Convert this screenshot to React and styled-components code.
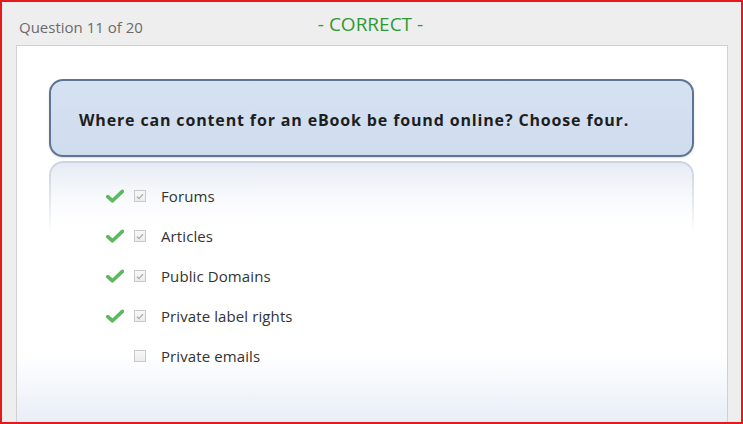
import React from "react";
import styled, { createGlobalStyle } from "styled-components";

const GlobalStyle = createGlobalStyle`
    html, body {
        margin: 0;
        padding: 0;
    }
    body {
        font-family: "Open Sans", "Liberation Sans", sans-serif;
    }
`;

const Frame = styled.div`
    width: 743px;
    height: 424px;
    box-sizing: border-box;
    border: 2px solid #e3191c;
    background: #eeeeee;
    display: flex;
    flex-direction: column;
    overflow: hidden;
`;

const Header = styled.div`
    height: 43px;
    display: grid;
    grid-template-columns: 1fr auto 1fr;
    align-items: start;
    padding: 0 17px;
`;

const Counter = styled.div`
    font-size: 15px;
    color: #6b6b6b;
    padding-top: 15px;
`;

const Verdict = styled.div`
    font-size: 19px;
    color: #2f9a33;
    padding-top: 9px;
    margin-left: -2px;
`;

const Card = styled.div`
    flex: 1;
    margin: 0 13px 0 14px;
    border: 1px solid #d0d0d0;
    border-bottom: none;
    background: linear-gradient(to bottom, #ffffff 0%, #ffffff 82%, #e8eef7 100%);
    padding: 33px 32px 0;
`;

const QuestionBox = styled.div`
    height: 78px;
    width: 645px;
    box-sizing: border-box;
    border: 2px solid #5d7494;
    border-radius: 14px;
    background: linear-gradient(to bottom, #d6e2f2, #cfdcee);
    box-shadow: 0 1px 2px rgba(0, 0, 0, 0.15);
    display: flex;
    align-items: center;
    padding: 4px 0 0 28px;
    font-size: 16px;
    font-weight: 700;
    letter-spacing: 0.85px;
    color: #1e1e1e;
`;

const AnswerArea = styled.div`
    position: relative;
    margin-top: 4px;
    padding-top: 15px;
    width: 645px;

    &::before {
        content: "";
        position: absolute;
        top: 0;
        left: 0;
        right: 0;
        height: 74px;
        box-sizing: border-box;
        border: 2px solid #c9d2de;
        border-bottom: none;
        border-radius: 14px 14px 0 0;
        background: linear-gradient(to bottom, #e4eaf3, #ffffff);
        -webkit-mask-image: linear-gradient(to bottom, #000 0%, rgba(0, 0, 0, 0.55) 50%, transparent 100%);
        mask-image: linear-gradient(to bottom, #000 0%, rgba(0, 0, 0, 0.55) 50%, transparent 100%);
    }
`;

const Option = styled.div`
    position: relative;
    height: 40px;
    display: flex;
    align-items: center;
    padding-left: 57px;
    font-size: 15px;
    color: #333333;
`;

const Mark = styled.span`
    width: 18px;
    height: 14px;
    margin-right: 10px;
    display: flex;
    visibility: ${({ shown }) => (shown ? "visible" : "hidden")};
`;

const Box = styled.span`
    width: 12px;
    height: 12px;
    box-sizing: border-box;
    border: 1px solid #c9c9c9;
    background: linear-gradient(to bottom, #f7f7f7, #ececec);
    margin-right: 15px;
    display: flex;
    align-items: center;
    justify-content: center;
`;

const Label = styled.span`
    line-height: 20px;
    letter-spacing: 0.1px;
`;

const options = [
    { text: "Forums", picked: true },
    { text: "Articles", picked: true },
    { text: "Public Domains", picked: true },
    { text: "Private label rights", picked: true },
    { text: "Private emails", picked: false },
];

function GreenCheck() {
    return (
        <svg width="18" height="14" viewBox="0 0 18 14">
            <path d="M1.8 7.6 L6.5 11.8 L16.4 2.4" fill="none" stroke="#5db95d" strokeWidth="3.6" strokeLinecap="round" strokeLinejoin="round" />
        </svg>
    );
}

function Tick() {
    return (
        <svg width="8" height="7" viewBox="0 0 8 7">
            <path d="M1 3.8 L3 5.6 L7 1.2" fill="none" stroke="#a9a9a9" strokeWidth="1.2" />
        </svg>
    );
}

export default function App() {
    return (
        <>
            <GlobalStyle />
            <Frame>
                <Header>
                    <Counter>Question 11 of 20</Counter>
                    <Verdict>- CORRECT -</Verdict>
                    <div />
                </Header>
                <Card>
                    <QuestionBox>Where can content for an eBook be found online? Choose four.</QuestionBox>
                    <AnswerArea>
                        {options.map((option) => (
                            <Option key={option.text}>
                                <Mark shown={option.picked}>
                                    <GreenCheck />
                                </Mark>
                                <Box>{option.picked && <Tick />}</Box>
                                <Label>{option.text}</Label>
                            </Option>
                        ))}
                    </AnswerArea>
                </Card>
            </Frame>
        </>
    );
}
